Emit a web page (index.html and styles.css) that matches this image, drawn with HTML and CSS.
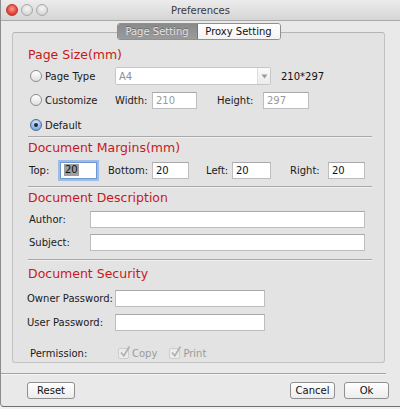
FILE: index.html
```html
<!DOCTYPE html>
<html>
<head>
<meta charset="utf-8">
<link rel="stylesheet" href="styles.css">
</head>
<body>
<div class="window">
  <div class="titlebar">
    <div class="lights">
      <span class="light red"></span>
      <span class="light"></span>
      <span class="light"></span>
    </div>
    <div class="title">Preferences</div>
  </div>

  <div class="panel">
    <div class="segmented">
      <div class="seg seg-on">Page Setting</div>
      <div class="seg">Proxy Setting</div>
    </div>

    <div class="heading h-size">Page Size(mm)</div>
    <div class="row r-type">
      <div class="radio-block"><span class="radio"></span><span class="lbl">Page Type</span></div>
      <div class="select"><span class="sel-text">A4</span><span class="sel-arrow"><svg width="7" height="5" viewBox="0 0 7 5"><path d="M0.5 0.5 L6.5 0.5 L3.5 4.5 Z" fill="#9a9a9a"/></svg></span></div>
      <span class="dims">210*297</span>
    </div>
    <div class="row r-custom">
      <div class="radio-block"><span class="radio"></span><span class="lbl">Customize</span></div>
      <span class="lbl w-width">Width:</span>
      <div class="input dis i-width">210</div>
      <span class="lbl w-height">Height:</span>
      <div class="input dis i-height">297</div>
    </div>
    <div class="row r-default">
      <div class="radio-block"><span class="radio on"><span class="dot"></span></span><span class="lbl">Default</span></div>
    </div>
    <div class="sep s1"></div>

    <div class="heading h-margins">Document Margins(mm)</div>
    <div class="row r-margins">
      <span class="lbl m-top">Top:</span>
      <div class="input focus i-m"><span class="selected">20</span></div>
      <span class="lbl m-bottom">Bottom:</span>
      <div class="input i-m">20</div>
      <span class="lbl m-left">Left:</span>
      <div class="input i-m i-left">20</div>
      <span class="lbl m-right">Right:</span>
      <div class="input i-m">20</div>
    </div>
    <div class="sep s2"></div>

    <div class="heading h-desc">Document Description</div>
    <div class="row r-author">
      <span class="lbl d-lbl">Author:</span>
      <div class="input i-desc"></div>
    </div>
    <div class="row r-subject">
      <span class="lbl d-lbl">Subject:</span>
      <div class="input i-desc"></div>
    </div>
    <div class="sep s3"></div>

    <div class="heading h-sec">Document Security</div>
    <div class="row r-owner">
      <span class="lbl p-lbl">Owner Password:</span>
      <div class="input i-pw"></div>
    </div>
    <div class="row r-user">
      <span class="lbl p-lbl">User Password:</span>
      <div class="input i-pw"></div>
    </div>
    <div class="row r-perm">
      <span class="lbl perm-lbl">Permission:</span>
      <span class="check"><svg width="14" height="14" viewBox="0 0 14 14"><path d="M3 7.5 L5.8 10.8 L11.5 1.5" fill="none" stroke="#b2b2b2" stroke-width="1.8"/></svg></span>
      <span class="lbl dim c-copy">Copy</span>
      <span class="check"><svg width="14" height="14" viewBox="0 0 14 14"><path d="M3 7.5 L5.8 10.8 L11.5 1.5" fill="none" stroke="#b2b2b2" stroke-width="1.8"/></svg></span>
      <span class="lbl dim">Print</span>
    </div>
  </div>

  <div class="footer-sep"></div>
  <div class="buttons">
    <div class="btn b-reset">Reset</div>
    <div class="spacer"></div>
    <div class="btn b-cancel">Cancel</div>
    <div class="btn b-ok">Ok</div>
  </div>
</div>
</body>
</html>
```

FILE: styles.css
```css
html, body {
  margin: 0;
  padding: 0;
  background: #f2f2f2;
}
body {
  width: 400px;
  height: 409px;
  overflow: hidden;
  font-family: "DejaVu Sans", "Liberation Sans", sans-serif;
  font-size: 10px;
  color: #1a1a1a;
}
.window {
  width: 399px;
  height: 406px;
  background: #e9e9e9;
  border-left: 1px solid #8c8c8c;
  border-bottom: 1px solid #6f6f6f;
  border-bottom-left-radius: 4px;
  overflow: hidden;
}
.titlebar {
  height: 20px;
  background: linear-gradient(#ececec, #d5d5d5);
  border-bottom: 1px solid #a9a9a9;
  display: flex;
  align-items: center;
}
.lights {
  display: flex;
  gap: 3px;
  padding-left: 5px;
}
.light {
  width: 12px;
  height: 12px;
  box-sizing: border-box;
  border-radius: 50%;
  background: radial-gradient(circle at 50% 35%, #f6f6f6, #cbcbcb);
  border: 1px solid #a8a8a8;
}
.light.red {
  background: radial-gradient(circle at 50% 40%, #ff9a90, #e2463b 60%, #c4241c);
  border-color: #b33a31;
}
.title {
  flex: 1;
  text-align: center;
  margin-left: -47px;
  color: #383838;
  font-size: 10px;
}

.panel {
  margin: 11px 15px 0 11px;
  height: 329px;
  background: #e3e3e3;
  border: 1px solid #c2c2c2;
  border-top-color: #b4b4b4;
  border-radius: 3px;
  display: flex;
  flex-direction: column;
}
.segmented {
  align-self: center;
  margin-top: -10px;
  height: 15px;
  display: flex;
  border: 1px solid #8f8f8f;
  border-radius: 3px;
  overflow: hidden;
  background: #fff;
}
.seg {
  display: flex;
  align-items: center;
  justify-content: center;
  font-size: 10px;
  line-height: 15px;
}
.seg-on {
  width: 79px;
  background: linear-gradient(#8a8a8a, #9b9b9b);
  color: #e4e4e4;
  border-right: 1px solid #777;
  text-shadow: 0 -1px 0 #6a6a6a;
}
.seg:not(.seg-on) {
  width: 82px;
  background: linear-gradient(#ffffff, #f3f3f3);
  color: #111;
}

.heading {
  color: #c6191c;
  font-size: 12.5px;
  line-height: 17px;
  height: 17px;
  padding-left: 15px;
}
.h-size { margin-top: 6px; }
.h-margins { margin-top: 1px; }
.h-desc { margin-top: 1px; }
.h-sec { margin-top: 4px; }

.row {
  display: flex;
  align-items: center;
  height: 18px;
}
.r-type { margin-top: 4px; padding-left: 17px; }
.r-custom { margin-top: 6px; padding-left: 17px; }
.r-default { margin-top: 7px; padding-left: 17px; }
.r-margins { margin-top: 5px; padding-left: 16px; }
.r-author { margin-top: 5px; height: 17px; padding-left: 16px; }
.r-subject { margin-top: 6px; height: 17px; padding-left: 16px; }
.r-owner { margin-top: 8px; height: 17px; padding-left: 14px; }
.r-user { margin-top: 7px; height: 17px; padding-left: 14px; }
.r-perm { margin-top: 14px; height: 16px; padding-left: 17px; }

.lbl {
  white-space: nowrap;
  font-size: 10px;
}
.radio-block {
  width: 85px;
  display: flex;
  align-items: center;
}
.radio {
  width: 12px;
  height: 12px;
  box-sizing: border-box;
  border-radius: 50%;
  border: 1px solid #8d8d8d;
  background: linear-gradient(#ffffff, #e0e0e0);
  margin-right: 3px;
  flex: none;
  display: flex;
  align-items: center;
  justify-content: center;
}
.radio.on {
  border-color: #4a6e9c;
  background: radial-gradient(circle at 50% 30%, #dceafb, #8fb6e6 60%, #6b9bd8);
}
.dot {
  width: 4px;
  height: 4px;
  border-radius: 50%;
  background: #1c2a3c;
}

.select {
  width: 156px;
  height: 18px;
  box-sizing: border-box;
  background: #fff;
  border: 1px solid #c6c6c6;
  border-radius: 2px;
  display: flex;
  align-items: center;
}
.sel-text {
  flex: 1;
  color: #8f8f8f;
  padding-left: 3px;
}
.sel-arrow {
  width: 12px;
  height: 16px;
  border-left: 1px solid #dedede;
  background: linear-gradient(#fafafa, #ececec);
  display: flex;
  align-items: center;
  justify-content: center;
}
.dims {
  margin-left: 10px;
  color: #111;
  font-size: 10px;
}

.input {
  height: 17px;
  box-sizing: border-box;
  background: #fff;
  border: 1px solid #bdbdbd;
  border-top-color: #a8a8a8;
  display: flex;
  align-items: center;
  padding-left: 3px;
  font-size: 10px;
  color: #111;
}
.input.dis { color: #9a9a9a; }
.w-width { width: 37px; }
.i-width { width: 45px; }
.w-height { width: 46px; margin-left: 20px; }
.i-height { width: 46px; }

.i-m { width: 37px; }
.m-top { width: 31px; }
.m-bottom { width: 44px; margin-left: 11px; }
.m-left { width: 26px; margin-left: 17px; }
.i-left { width: 39px; }
.m-right { width: 38px; margin-left: 19px; }
.input.focus {
  border-color: #6f98d0;
  box-shadow: 0 0 0 2px #9dbde8;
}
.selected {
  background: #9e9e9e;
  color: #111;
  padding: 0 1px;
  line-height: 12px;
}

.d-lbl { width: 61px; }
.i-desc { width: 275px; }
.p-lbl { width: 88px; }
.i-pw { width: 150px; }
.perm-lbl { width: 88px; }
.check {
  width: 11px;
  height: 11px;
  box-sizing: border-box;
  border: 1px solid #cdcdcd;
  border-radius: 2px;
  background: #ececec;
  margin-right: 3px;
  position: relative;
}
.check svg {
  position: absolute;
  left: -1px;
  top: -4px;
}
.dim { color: #9a9a9a; }
.c-copy { margin-right: 12px; }

.sep {
  height: 1px;
  background: #a9a9a9;
  border-bottom: 1px solid #f1f1f1;
  margin-left: 15px;
  margin-right: 12px;
}
.s1 { margin-top: 2px; }
.s2 { margin-top: 7px; }
.s3 { margin-top: 8px; }

.footer-sep {
  margin-top: 10px;
  margin-right: 14px;
  height: 1px;
  background: #a3a3a3;
  border-bottom: 1px solid #f6f6f6;
}
.buttons {
  display: flex;
  margin-top: 7px;
  padding-left: 26px;
  padding-right: 11px;
}
.btn {
  height: 17px;
  box-sizing: border-box;
  border: 1px solid #8f8f8f;
  border-radius: 3px;
  background: linear-gradient(#ffffff, #ececec);
  display: flex;
  align-items: center;
  justify-content: center;
  font-size: 10px;
  color: #111;
}
.b-reset { width: 48px; }
.spacer { flex: 1; }
.b-cancel { width: 45px; margin-right: 9px; }
.b-ok { width: 45px; }
```
